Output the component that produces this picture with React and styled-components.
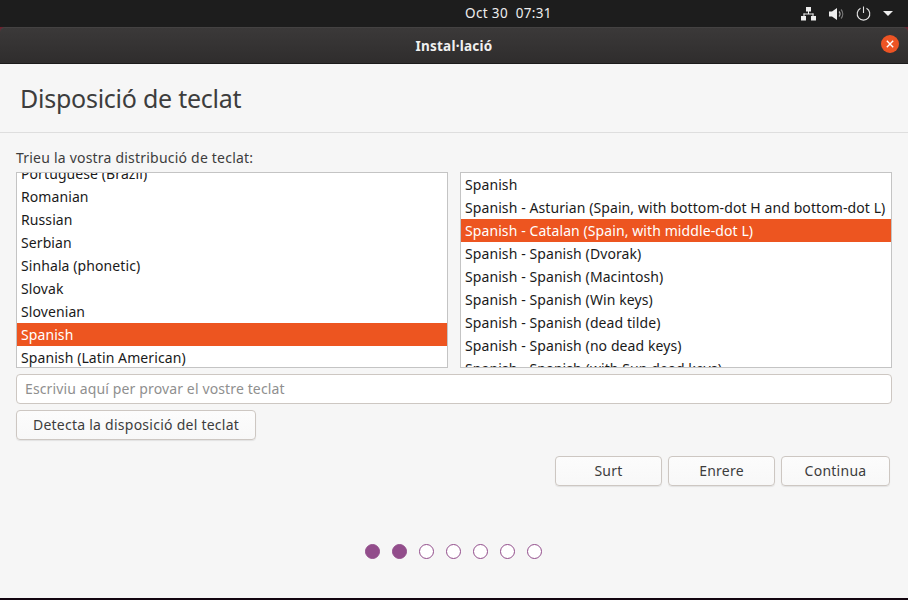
import React from "react";
import styled, { createGlobalStyle } from "styled-components";

const Global = createGlobalStyle`
  html, body { margin: 0; padding: 0; background: #000; }
  * { box-sizing: border-box; }
  #root { width: 908px; height: 600px; overflow: hidden; }
`;
const Screen = styled.div`
  width: 908px; height: 600px; display: flex; flex-direction: column;
  font-family: "Noto Sans", "Open Sans", sans-serif; font-size: 14px; background: #f6f6f6;
`;
const TopBar = styled.div`
  height: 27px; flex: none; background: #1d1d1d; color: #eee; position: relative;
  display: flex; align-items: center; justify-content: flex-end; padding-right: 15px; gap: 0;
`;
const Clock = styled.div`
  position: absolute; left: 465px; top: 4px; font-size: 13.5px; line-height: 18px; letter-spacing: 0.35px; white-space: pre;
`;
const Tray = styled.div`display: flex; align-items: center; gap: 12px;`;
const TitleWrap = styled.div`height: 37px; flex: none; background: #6e2230;`;
const TitleBar = styled.div`
  height: 37px; border-radius: 5px 5px 0 0; position: relative;
  background: linear-gradient(#3b3939, #2f2d2d); border-top: 1px solid #444242; border-bottom: 1px solid #1b1b1b;
  display: flex; align-items: center; justify-content: center;
  color: #f0f0f0; font-weight: 700; font-size: 13.5px; letter-spacing: 0.25px;
`;
const Close = styled.div`
  position: absolute; right: 9px; top: 7px; width: 18px; height: 18px; border-radius: 50%;
  background: #ed5424; display: flex; align-items: center; justify-content: center;
`;
const Header = styled.div`
  height: 69px; flex: none; border-bottom: 1px solid #dedede; padding: 17px 0 0 20px;
  font-size: 25px; line-height: 34px; color: #3d3d3d; letter-spacing: -0.25px;
`;
const Body = styled.div`flex: 1; display: flex; flex-direction: column; padding: 0 16px;`;
const Label = styled.div`
  height: 39px; flex: none; padding-top: 15px; font-size: 14px; line-height: 19px; color: #3d3d3d; letter-spacing: 0.21px;
`;
const Lists = styled.div`display: flex; gap: 12px; height: 196px; flex: none;`;
const List = styled.div`
  flex: none; width: 432px; height: 196px; background: #fff; border: 1px solid #c4c4c4; overflow: hidden;
`;
const Rows = styled.div`margin-top: ${p => p.$offset}px;`;
const Row = styled.div`
  height: 23px; padding-left: 4px; line-height: 24px; font-size: 14px; white-space: nowrap; letter-spacing: 0.09px;
  color: ${p => p.$on ? "#fff" : "#1a1a1a"}; background: ${p => p.$on ? "#ed5520" : "transparent"};
`;
const Entry = styled.input`
  display: block; width: 876px; height: 30px; margin-top: 6px; flex: none; background: #fff; border: 1px solid #cdc7c2;
  border-radius: 4px; padding: 0 8px 2px; font: inherit; font-size: 14px; letter-spacing: 0.13px; outline: none;
  &::placeholder { color: #8f8f8f; opacity: 1; }
`;
const Button = styled.div`
  height: 30px; width: ${p => p.$w}px; flex: none; display: flex; align-items: center; justify-content: center;
  border: 1px solid #cdc7c2; border-radius: 4px; background: linear-gradient(#fcfcfc, #f8f8f8); padding-bottom: 2px;
  box-shadow: 0 1px 1px rgba(0,0,0,.08); color: #3d3d3d; font-size: 14px; letter-spacing: 0.25px;
`;
const DetectRow = styled.div`margin-top: 6px; display: flex;`;
const Actions = styled.div`margin-top: 16px; padding-left: 539px; display: flex; gap: 6px;`;
const Dots = styled.div`margin-top: 58px; display: flex; justify-content: center; gap: 12px; padding-right: 2px;`;
const Dot = styled.div`
  width: 15px; height: 15px; border-radius: 50%; border: 1px solid #924d8b;
  background: ${p => p.$on ? "#924d8b" : "#fff"};
`;
const Base = styled.div`height: 2px; flex: none; background: #12050f;`;

const left = ["Portuguese (Brazil)", "Romanian", "Russian", "Serbian", "Sinhala (phonetic)", "Slovak", "Slovenian", "Spanish", "Spanish (Latin American)"];
const right = ["Spanish", "Spanish - Asturian (Spain, with bottom-dot H and bottom-dot L)", "Spanish - Catalan (Spain, with middle-dot L)", "Spanish - Spanish (Dvorak)", "Spanish - Spanish (Macintosh)", "Spanish - Spanish (Win keys)", "Spanish - Spanish (dead tilde)", "Spanish - Spanish (no dead keys)", "Spanish - Spanish (with Sun dead keys)"];

export default function App() {
  return (
    <Screen>
      <Global />
      <TopBar>
        <Clock>Oct 30  07:31</Clock>
        <Tray>
          <svg width="16" height="14" viewBox="0 0 16 14" fill="#eee">
            <rect x="5" y="0" width="5" height="4.5" /><rect x="7" y="4" width="1" height="3" />
            <rect x="2.5" y="6.5" width="10" height="1" /><rect x="2.5" y="6.5" width="1" height="3" /><rect x="11.5" y="6.5" width="1" height="3" />
            <rect x="0" y="9" width="5" height="4.5" /><rect x="10" y="9" width="5" height="4.5" />
          </svg>
          <svg width="15" height="14" viewBox="0 0 15 14" fill="none">
            <path d="M0 4.5h3L8 1v12L3 9.5H0z" fill="#eee" />
            <path d="M10 4.5a3.5 3.5 0 0 1 0 5" stroke="#bbb" strokeWidth="1.1" />
            <path d="M12 2.5a6.5 6.5 0 0 1 0 9" stroke="#777" strokeWidth="1.1" />
          </svg>
          <svg width="15" height="15" viewBox="0 0 15 15" fill="none" stroke="#e4e4e4" strokeWidth="1.1">
            <path d="M4.5 2.3a6.3 6.3 0 1 0 6 0" /><path d="M7.5 0.5v6.5" />
          </svg>
          <svg width="10" height="5" viewBox="0 0 10 5" fill="#eee"><path d="M0 0h10L5 5z" /></svg>
        </Tray>
      </TopBar>
      <TitleWrap>
        <TitleBar>
          Instal·lació
          <Close>
            <svg width="8" height="8" viewBox="0 0 8 8" stroke="#fff" strokeWidth="1.4"><path d="M.8.8l6.4 6.4M7.2.8L.8 7.2" /></svg>
          </Close>
        </TitleBar>
      </TitleWrap>
      <Header>Disposició de teclat</Header>
      <Body>
        <Label>Trieu la vostra distribució de teclat:</Label>
        <Lists>
          <List>
            <Rows $offset={-11}>{left.map(t => <Row key={t} $on={t === "Spanish"}>{t}</Row>)}</Rows>
          </List>
          <List>
            <Rows $offset={0}>{right.map((t, i) => <Row key={t} $on={i === 2}>{t}</Row>)}</Rows>
          </List>
        </Lists>
        <Entry placeholder="Escriviu aquí per provar el vostre teclat" readOnly />
        <DetectRow><Button $w={240}>Detecta la disposició del teclat</Button></DetectRow>
        <Actions>
          <Button $w={107}>Surt</Button>
          <Button $w={107}>Enrere</Button>
          <Button $w={109}>Continua</Button>
        </Actions>
        <Dots>{[1, 1, 0, 0, 0, 0, 0].map((v, i) => <Dot key={i} $on={!!v} />)}</Dots>
      </Body>
      <Base />
    </Screen>
  );
}
